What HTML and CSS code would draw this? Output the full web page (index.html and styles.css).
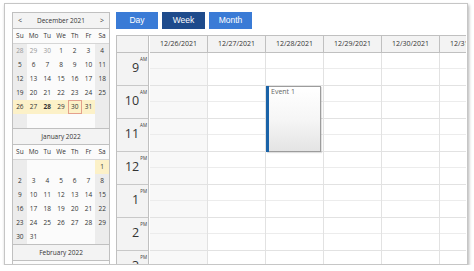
FILE: index.html
```html
<!DOCTYPE html>
<html>
<head>
<meta charset="utf-8">
<link rel="stylesheet" href="styles.css">
</head>
<body>
<div class="card">
  <div class="nav">
    <div class="title"><span class="arr">&lt;</span><span class="mname">December 2021</span><span class="arr">&gt;</span></div>
    <div class="days">
      <div class="dn">Su</div><div class="dn">Mo</div><div class="dn">Tu</div><div class="dn">We</div><div class="dn">Th</div><div class="dn">Fr</div><div class="dn">Sa</div>
      <div class="c we o">28</div><div class="c o">29</div><div class="c o">30</div><div class="c">1</div><div class="c">2</div><div class="c">3</div><div class="c we">4</div>
      <div class="c we">5</div><div class="c">6</div><div class="c">7</div><div class="c">8</div><div class="c">9</div><div class="c">10</div><div class="c we">11</div>
      <div class="c we">12</div><div class="c">13</div><div class="c">14</div><div class="c">15</div><div class="c">16</div><div class="c">17</div><div class="c we">18</div>
      <div class="c we">19</div><div class="c">20</div><div class="c">21</div><div class="c">22</div><div class="c">23</div><div class="c">24</div><div class="c we">25</div>
      <div class="c sel">26</div><div class="c sel">27</div><div class="c sel busy">28</div><div class="c sel">29</div><div class="c sel today">30</div><div class="c sel">31</div><div class="c we"></div>
      <div class="c we"></div><div class="c"></div><div class="c"></div><div class="c"></div><div class="c"></div><div class="c"></div><div class="c we"></div>
    </div>
    <div class="title"><span class="arr"></span><span class="mname">January 2022</span><span class="arr"></span></div>
    <div class="days">
      <div class="dn">Su</div><div class="dn">Mo</div><div class="dn">Tu</div><div class="dn">We</div><div class="dn">Th</div><div class="dn">Fr</div><div class="dn">Sa</div>
      <div class="c we"></div><div class="c"></div><div class="c"></div><div class="c"></div><div class="c"></div><div class="c"></div><div class="c sel">1</div>
      <div class="c we">2</div><div class="c">3</div><div class="c">4</div><div class="c">5</div><div class="c">6</div><div class="c">7</div><div class="c we">8</div>
      <div class="c we">9</div><div class="c">10</div><div class="c">11</div><div class="c">12</div><div class="c">13</div><div class="c">14</div><div class="c we">15</div>
      <div class="c we">16</div><div class="c">17</div><div class="c">18</div><div class="c">19</div><div class="c">20</div><div class="c">21</div><div class="c we">22</div>
      <div class="c we">23</div><div class="c">24</div><div class="c">25</div><div class="c">26</div><div class="c">27</div><div class="c">28</div><div class="c we">29</div>
      <div class="c we">30</div><div class="c">31</div><div class="c"></div><div class="c"></div><div class="c"></div><div class="c"></div><div class="c we"></div>
    </div>
    <div class="title"><span class="arr"></span><span class="mname">February 2022</span><span class="arr"></span></div>
    <div class="days rest"></div>
  </div>

  <div class="sched">
    <div class="toolbar">
      <div class="btn">Day</div>
      <div class="btn active">Week</div>
      <div class="btn">Month</div>
    </div>
    <div class="cal">
      <div class="hd corner"></div>
      <div class="hd">12/26/2021</div>
      <div class="hd">12/27/2021</div>
      <div class="hd">12/28/2021</div>
      <div class="hd">12/29/2021</div>
      <div class="hd">12/30/2021</div>
      <div class="hd">12/31/2021</div>

      <div class="hours">
        <div class="hr"><span class="hn">9</span><span class="ap">AM</span></div>
        <div class="hr"><span class="hn">10</span><span class="ap">AM</span></div>
        <div class="hr"><span class="hn">11</span><span class="ap">AM</span></div>
        <div class="hr"><span class="hn">12</span><span class="ap">PM</span></div>
        <div class="hr"><span class="hn">1</span><span class="ap">PM</span></div>
        <div class="hr"><span class="hn">2</span><span class="ap">PM</span></div>
        <div class="hr"><span class="hn">3</span><span class="ap">PM</span></div>
      </div>
      <div class="col wknd"></div>
      <div class="col"></div>
      <div class="col">
        <div class="ev"><span class="bar"></span>Event 1</div>
      </div>
      <div class="col"></div>
      <div class="col"></div>
      <div class="col"></div>
    </div>
  </div>
</div>
</body>
</html>
```
FILE: styles.css
```css
* { box-sizing: border-box; }
body { margin: 0; background: #fff; font-family: "Open Sans", "Noto Sans", sans-serif; }

.card {
  margin: 3px 0 0 4px;
  width: 464px;
  height: 262px;
  border: 1px solid #c6c6c6;
  box-shadow: 1px 2px 3px rgba(0,0,0,0.3);
  padding: 8px 1px 0 7px;
  display: flex;
  gap: 6px;
  overflow: hidden;
  background: #fff;
}

/* navigator */
.nav {
  width: 98px;
  flex: none;
  border-left: 1px solid #c0c0c0;
  border-right: 1px solid #c0c0c0;
  font-size: 6.5px;
  color: #333;
}
.title {
  display: flex;
  align-items: center;
  height: 17px;
  background: #f3f3f3;
  border-top: 1px solid #c0c0c0;
  border-bottom: 1px solid #c0c0c0;
}
.arr { width: 14px; text-align: center; font-size: 7px; }
.mname { flex: 1; text-align: center; }
.days { display: grid; grid-template-columns: repeat(7, 1fr); }
.days.rest { height: 20px; background: #fbfbfb; }
.dn {
  height: 15px;
  line-height: 14px;
  text-align: center;
  background: #fbfbfb;
  border-bottom: 1px solid #d6d6d6;
}
.c {
  height: 14px;
  line-height: 14px;
  text-align: center;
  background: #fbfbfb;
}
.c.we { background: #ececec; }
.c.o { color: #999; }
.c.sel { background: #fcf1c8; }
.c.today { box-shadow: inset 0 0 0 1px #e4a08c; }
.c.busy { font-weight: 700; }

/* scheduler */
.sched {
  flex: 1;
  min-width: 0;
  display: flex;
  flex-direction: column;
}
.toolbar {
  display: flex;
  gap: 4px;
  height: 17px;
  margin-bottom: 6px;
  flex: none;
}
.btn {
  width: 43px;
  background: #3a7bd6;
  color: #fff;
  font-family: "Liberation Sans", Arial, sans-serif;
  font-size: 8.5px;
  line-height: 17px;
  text-align: center;
}
.btn:first-child { width: 42px; }
.btn.active { background: #1e4b8c; }

.cal {
  flex: 1;
  display: grid;
  grid-template-columns: 33px repeat(6, 58px);
  grid-template-rows: 17px auto;
  border-top: 1px solid #c0c0c0;
  border-left: 1px solid #c0c0c0;
  overflow: hidden;
  align-content: start;
}
.hd {
  background: #f3f3f3;
  border-right: 1px solid #c0c0c0;
  border-bottom: 1px solid #c0c0c0;
  font-size: 7px;
  color: #333;
  text-align: center;
  line-height: 15px;
  white-space: nowrap;
  overflow: hidden;
}
.hd.corner { width: 32px; }

.hours {
  width: 32px;
  background: #f3f3f3;
  border-right: 1px solid #c0c0c0;
}
.hr {
  height: 33px;
  border-bottom: 1px solid #c8c8c8;
  text-align: right;
  padding: 2px 1px 0 0;
  color: #333;
  white-space: nowrap;
}
.hn { font-size: 12.5px; line-height: 14px; }
.ap {
  display: inline-block;
  vertical-align: top;
  font-size: 4.5px;
  line-height: 5px;
  margin: 2px 0 0 1px;
}

.col {
  position: relative;
  height: 231px;
  border-right: 1px solid #e2e2e2;
  background-color: #fff;
  background-image: repeating-linear-gradient(to bottom,
    transparent 0, transparent 15px, #ececec 15px, #ececec 16px,
    transparent 16px, transparent 32px, #e2e2e2 32px, #e2e2e2 33px);
}
.col.wknd { background-color: #f8f8f8; }

.ev {
  position: absolute;
  top: 33px;
  left: 0;
  width: 55px;
  height: 66px;
  border: 1px solid #9c9c9c;
  background: linear-gradient(to bottom, #ffffff 0%, #f6f6f6 50%, #e4e4e4 100%);
  box-shadow: 1px 1px 1px rgba(0,0,0,0.12);
  color: #666;
  font-size: 7px;
  line-height: 10px;
  padding: 0 0 0 4px;
}
.bar {
  position: absolute;
  left: -1px;
  top: -1px;
  bottom: -1px;
  width: 3px;
  background: #1a63a8;
}
```
